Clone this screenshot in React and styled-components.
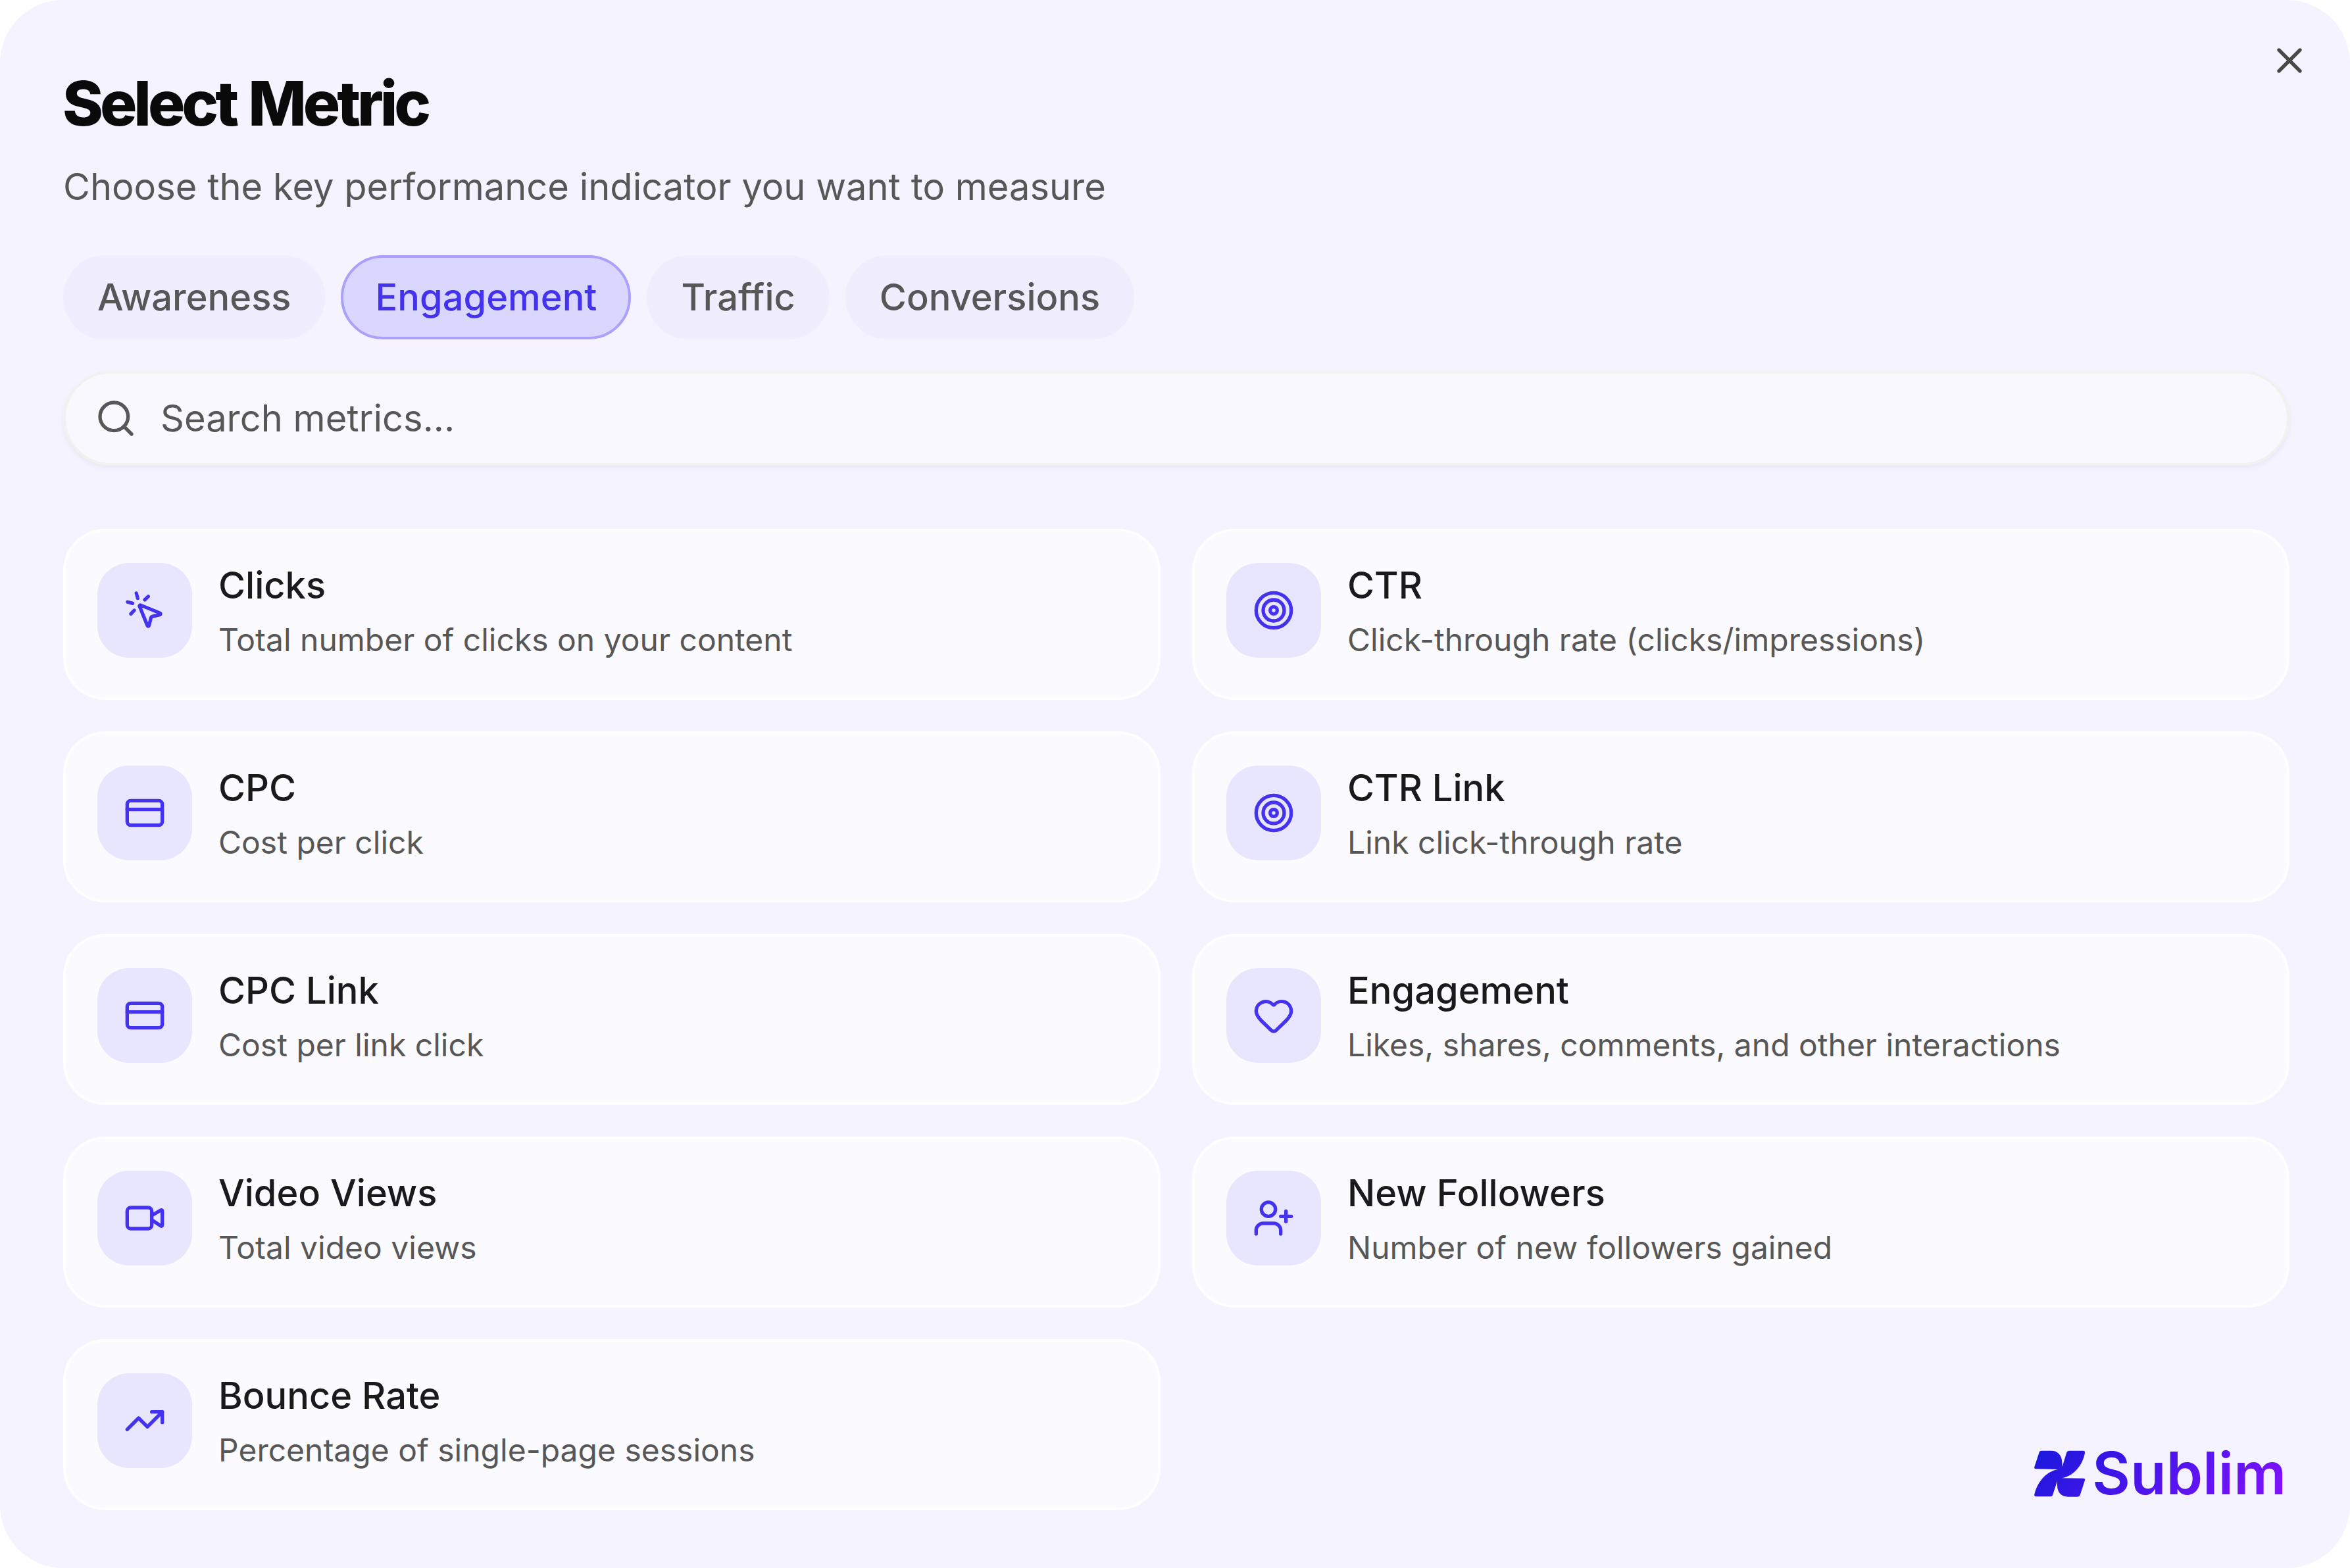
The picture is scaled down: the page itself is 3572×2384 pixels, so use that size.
import React from "react";
import styled, { createGlobalStyle } from "styled-components";
import {
  CreditCard,
  Heart,
  MousePointerClick,
  Search,
  Target,
  TrendingUp,
  UserPlus,
  Video,
  X,
} from "lucide-react";

const tabs = ["Awareness", "Engagement", "Traffic", "Conversions"];

const metrics = [
  { name: "Clicks", description: "Total number of clicks on your content", icon: MousePointerClick },
  { name: "CTR", description: "Click-through rate (clicks/impressions)", icon: Target },
  { name: "CPC", description: "Cost per click", icon: CreditCard },
  { name: "CTR Link", description: "Link click-through rate", icon: Target },
  { name: "CPC Link", description: "Cost per link click", icon: CreditCard },
  { name: "Engagement", description: "Likes, shares, comments, and other interactions", icon: Heart },
  { name: "Video Views", description: "Total video views", icon: Video },
  { name: "New Followers", description: "Number of new followers gained", icon: UserPlus },
  { name: "Bounce Rate", description: "Percentage of single-page sessions", icon: TrendingUp },
];

function Logo() {
  return (
    <LogoSvg viewBox="126 150 1140 240" aria-label="Sublim">
      <defs>
        <linearGradient id="brand" gradientUnits="userSpaceOnUse" x1="357" y1="-64" x2="1029" y2="608">
          <stop offset="0" stopColor="#1a18dc" />
          <stop offset="1" stopColor="#8311ff" />
        </linearGradient>
      </defs>
      <path
        fill="url(#brand)"
        d="M158 167H203C235 167 253 190 253 220L254 240L274 175Q277 167 285 167H350Q358 167 357 177C348 230 308 284 250 292L350 293Q360 294 357 302L335 370Q332 377 324 377H280C250 377 231 358 231 325V306L210 370Q208 376 201 376H134Q125 376 127 367C140 310 180 262 234 252L134 250Q124 250 127 241L149 174Q151 167 158 167Z"
      />
      <text x="391" y="366" fill="url(#brand)" textLength="884" lengthAdjust="spacing">
        Sublim
      </text>
    </LogoSvg>
  );
}

export default function App() {
  return (
    <>
      <GlobalStyle />
      <Dialog>
        <CloseButton aria-label="Close">
          <X size={64} />
        </CloseButton>
        <Title>Select Metric</Title>
        <Subtitle>Choose the key performance indicator you want to measure</Subtitle>
        <Tabs>
          {tabs.map((tab) => (
            <Tab key={tab} $active={tab === "Engagement"}>
              {tab}
            </Tab>
          ))}
        </Tabs>
        <SearchBar>
          <Search size={64} />
          <input type="text" placeholder="Search metrics..." />
        </SearchBar>
        <Grid>
          {metrics.map(({ name, description, icon: Icon }) => (
            <Card key={name}>
              <IconBox>
                <Icon size={64} />
              </IconBox>
              <div>
                <h3>{name}</h3>
                <p>{description}</p>
              </div>
            </Card>
          ))}
          <Brand>
            <Logo />
          </Brand>
        </Grid>
      </Dialog>
    </>
  );
}

const GlobalStyle = createGlobalStyle`
  * {
    box-sizing: border-box;
    margin: 0;
    padding: 0;
  }
  body {
    background: #ffffff;
    font-family: Inter, "Liberation Sans", sans-serif;
  }
`;

const Dialog = styled.div`
  position: relative;
  width: 3572px;
  height: 2384px;
  padding: 96px 92px 88px 96px;
  border-radius: 96px;
  background: #f5f3ff;
`;

const CloseButton = styled.button`
  position: absolute;
  top: 60px;
  right: 60px;
  display: flex;
  border: none;
  background: none;
  color: #484848;
`;

const Title = styled.h1`
  margin-left: -1px;
  font-size: 94px;
  font-weight: 800;
  line-height: 122px;
  letter-spacing: -0.054em;
  word-spacing: 0.04em;
  color: #0a0a0a;
`;

const Subtitle = styled.p`
  margin-top: 26px;
  font-size: 56px;
  line-height: 80px;
  color: #575757;
`;

const Tabs = styled.div`
  display: flex;
  gap: 24px;
  margin-top: 64px;
`;

const Tab = styled.button`
  height: 128px;
  padding: 0 48px;
  border: 4px solid ${({ $active }) => ($active ? "#aba0fb" : "#f0edff")};
  border-radius: 64px;
  background: ${({ $active }) => ($active ? "#dad7ff" : "#f0edff")};
  color: ${({ $active }) => ($active ? "#4532ee" : "#575757")};
  font-family: inherit;
  font-size: 56px;
  font-weight: 500;
`;

const SearchBar = styled.label`
  display: flex;
  align-items: center;
  gap: 36px;
  height: 144px;
  margin-top: 48px;
  padding: 0 44px;
  border: 4px solid #f1f1f0;
  border-radius: 72px;
  background: #f9f8ff;
  box-shadow: 0 4px 8px rgba(0, 0, 0, 0.05);
  color: #575757;
  input {
    flex: 1;
    border: none;
    outline: none;
    background: transparent;
    font-family: inherit;
    font-size: 56px;
    color: inherit;
    &::placeholder {
      color: #575757;
      opacity: 1;
    }
  }
`;

const Grid = styled.div`
  display: grid;
  grid-template-columns: 1fr 1fr;
  grid-auto-rows: 260px;
  gap: 48px;
  margin-top: 96px;
`;

const Card = styled.div`
  display: flex;
  align-items: flex-start;
  gap: 40px;
  padding: 48px;
  border: 4px solid #fefeff;
  border-radius: 64px;
  background: #fbfaff;
  h3 {
    font-size: 56px;
    font-weight: 500;
    line-height: 68px;
    color: #1a1a1a;
  }
  p {
    margin-top: 13px;
    font-size: 48px;
    line-height: 72px;
    color: #575757;
  }
`;

const IconBox = styled.div`
  display: flex;
  align-items: center;
  justify-content: center;
  width: 144px;
  height: 144px;
  border-radius: 48px;
  background: #e8e5ff;
  color: #4532ee;
`;

const Brand = styled.div`
  display: flex;
  align-items: flex-end;
  justify-content: flex-end;
  padding: 0 8px 16px 0;
`;

const LogoSvg = styled.svg`
  width: 380px;
  height: 80px;
  overflow: visible;
  text {
    font-family: Inter, "Liberation Sans", sans-serif;
    font-size: 266px;
    font-weight: 600;
  }
`;
